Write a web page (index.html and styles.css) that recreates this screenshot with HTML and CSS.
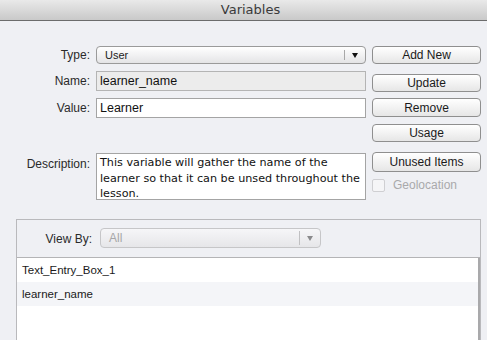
FILE: index.html
```html
<!DOCTYPE html>
<html lang="en">
  <head>
    <meta charset="UTF-8" />
    <title>Variables</title>
    <link rel="stylesheet" href="styles.css">
  </head>
  <body>
    <!-- Title bar -->
    <div class="titlebar">Variables</div>

    <!-- Editor -->
    <div class="editor">
      <div class="fields">
        <label class="label">Type:</label>
        <div class="select">
          <span class="select-value">User</span>
          <span class="select-arrow"></span>
        </div>

        <label class="label">Name:</label>
        <input class="input input-readonly" type="text" value="learner_name" readonly />

        <label class="label">Value:</label>
        <input class="input" type="text" value="Learner" />

        <label class="label label-top desc-label">Description:</label>
        <div class="textarea desc-field">This variable will gather the name of the learner so that it can be unsed throughout the lesson.</div>
      </div>

      <div class="actions">
        <button class="button btn-add">Add New</button>
        <button class="button btn-update">Update</button>
        <button class="button btn-remove">Remove</button>
        <button class="button btn-usage">Usage</button>
        <button class="button btn-unused">Unused Items</button>
        <label class="checkbox">
          <span class="checkbox-box"></span>
          Geolocation
        </label>
      </div>
    </div>

    <!-- Variable list -->
    <div class="panel">
      <div class="panel-header">
        <span class="label view-label">View By:</span>
        <div class="select select-disabled view-select">
          <span class="select-value">All</span>
          <span class="select-arrow"></span>
        </div>
      </div>
      <ul class="list">
        <li class="list-item">Text_Entry_Box_1</li>
        <li class="list-item list-item-alt">learner_name</li>
        <li class="list-item"></li>
      </ul>
    </div>
  </body>
</html>
```

FILE: styles.css
```css
* {
  margin: 0;
  padding: 0;
  box-sizing: border-box;
}
body {
  margin: 0;
  height: 340px;
  background-color: #eff0f4;
  font-family: "Liberation Sans", Arial, sans-serif;
  font-size: 12px;
  color: #222;
  overflow: hidden;
}

.titlebar {
  height: 21px;
  line-height: 20px;
  padding-left: 14px;
  text-align: center;
  font-family: "DejaVu Sans", sans-serif;
  font-size: 13px;
  color: #3a3a3a;
  background: linear-gradient(#e9e9e9, #c9c9c9);
  border-bottom: 1px solid #6c6c6c;
}

.editor {
  display: flex;
  padding: 25px 6px 0 0;
  gap: 6px;
}

.fields {
  display: grid;
  grid-template-columns: 90px 270px;
  column-gap: 6px;
  row-gap: 7px;
  align-items: center;
}

.label {
  text-align: right;
  color: #2a2a2a;
  font-size: 12px;
}
.label-top {
  align-self: start;
  padding-top: 4px;
}
.desc-label,
.desc-field {
  margin-top: 28px;
}

.select {
  height: 18px;
  display: flex;
  align-items: center;
  border: 1px solid #9a9a9a;
  border-radius: 4px;
  background: linear-gradient(#ffffff, #e4e4e6);
  padding-left: 8px;
}
.select-value {
  flex: 1;
  font-size: 11px;
  color: #222;
}
.select-arrow {
  width: 21px;
  height: 10px;
  border-left: 1px solid #a8a8a8;
  position: relative;
}
.select-arrow:after {
  content: "";
  position: absolute;
  left: 7px;
  top: 3px;
  border-left: 3.5px solid transparent;
  border-right: 3.5px solid transparent;
  border-top: 5px solid #111;
}

.input {
  height: 20px;
  border: 1px solid #a4a4a4;
  background-color: #fff;
  padding: 0 3px;
  font-family: "Liberation Sans", Arial, sans-serif;
  font-size: 12.5px;
  color: #111;
  outline: none;
}
.input-readonly {
  background-color: #ececec;
  border-color: #b4b4b4;
}

.textarea {
  height: 47px;
  border: 1px solid #a4a4a4;
  background-color: #fff;
  padding: 1px 3px 1px 3px;
  font-family: "DejaVu Sans", Verdana, sans-serif;
  font-size: 11.2px;
  line-height: 15.5px;
  color: #111;
}

.actions {
  display: flex;
  flex-direction: column;
  width: 109px;
}

.button {
  height: 18px;
  border: 1px solid #8f8f8f;
  border-radius: 4px;
  background: linear-gradient(#ffffff, #e6e6e6);
  font-family: "Liberation Sans", Arial, sans-serif;
  font-size: 12px;
  color: #1a1a1a;
}
.btn-update {
  margin-top: 10px;
}
.btn-remove {
  margin-top: 6px;
  height: 19px;
}
.btn-usage {
  margin-top: 7px;
}
.btn-unused {
  margin-top: 10px;
  height: 20px;
}

.checkbox {
  display: flex;
  align-items: center;
  gap: 8px;
  margin-top: 6px;
  font-size: 12px;
  color: #a9a9ab;
}
.checkbox-box {
  width: 13px;
  height: 13px;
  border: 1px solid #cfcfd2;
  border-radius: 2px;
  background-color: #f5f5f7;
}

.panel {
  margin: 19px 6px 0 16px;
  border: 1px solid #b9b9bc;
  border-bottom: none;
  height: 122px;
  display: flex;
  flex-direction: column;
}
.panel-header {
  height: 38px;
  flex-shrink: 0;
  display: flex;
  align-items: center;
  gap: 8px;
  border-bottom: 1px solid #b4b4b6;
}
.view-label {
  width: 75px;
}
.view-select {
  width: 221px;
  height: 20px;
  margin-top: -2px;
}
.select-disabled {
  border-color: #c6c6c8;
  background: linear-gradient(#f6f6f8, #e6e6e9);
}
.select-disabled .select-value {
  color: #a6a6a8;
  font-size: 12px;
}
.select-disabled .select-arrow {
  border-left-color: #c0c0c2;
  height: 14px;
}
.select-disabled .select-arrow:after {
  top: 5px;
  border-top-color: #8a8a8c;
}

.list {
  flex: 1;
  list-style: none;
  background-color: #fff;
  border-right: 2px solid #a9a9ab;
}
.list-item {
  height: 24px;
  line-height: 24px;
  padding-left: 5px;
  font-size: 11.5px;
  color: #1a1a1a;
}
.list-item-alt {
  background-color: #f4f5f8;
}
```
